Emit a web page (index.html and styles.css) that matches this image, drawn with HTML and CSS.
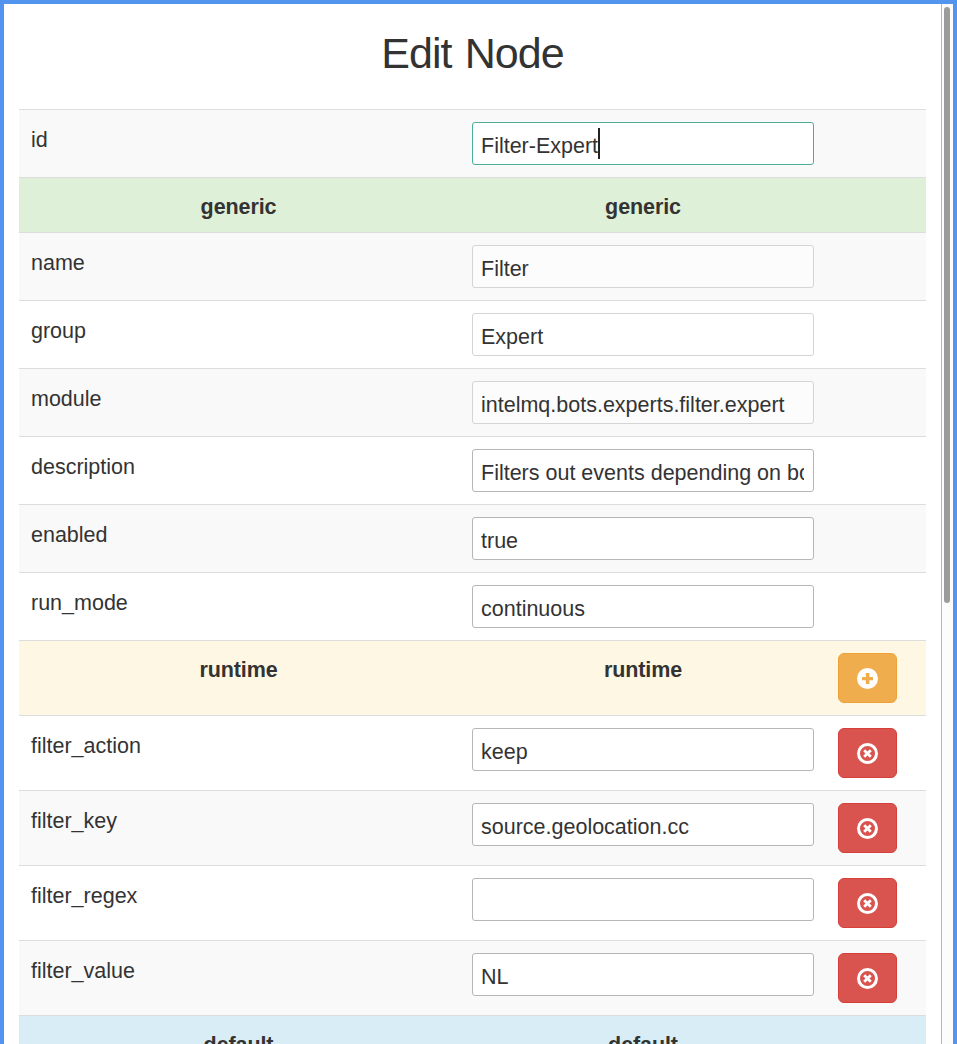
FILE: index.html
```
<!DOCTYPE html>
<html lang="en">
<head>
<meta charset="utf-8">
<title>Edit Node</title>
<link rel="stylesheet" href="styles.css">
</head>
<body>
<svg class="defs" aria-hidden="true">
  <symbol id="plus" viewBox="0 0 21 21"><path fill="#fff" fill-rule="evenodd" d="M10.5 0a10.5 10.5 0 1 0 0 21a10.5 10.5 0 1 0 0-21zM8.8 5h3.6v3.9H16v3.3h-3.6V16H8.8v-3.8H5V8.9h3.8z"/></symbol>
  <symbol id="remove" viewBox="0 0 21 21"><circle cx="10.5" cy="10.5" r="9" fill="none" stroke="#fff" stroke-width="3"/><path fill="none" stroke="#fff" stroke-width="2.8" d="M7.2 7.2l6.6 6.6M13.8 7.2l-6.6 6.6"/></symbol>
</svg>
<main class="dialog">
  <section class="content">
    <h1 class="title">Edit Node</h1>
    <div class="table">
      <div class="row odd"><div class="key">id</div><div class="cell"><div class="field focused">Filter-Expert<span class="caret"></span></div></div></div>
      <div class="row success"><div class="heading">generic</div><div class="heading">generic</div></div>
      <div class="row odd"><div class="key">name</div><div class="cell"><div class="field disabled">Filter</div></div></div>
      <div class="row"><div class="key">group</div><div class="cell"><div class="field disabled">Expert</div></div></div>
      <div class="row odd"><div class="key">module</div><div class="cell"><div class="field disabled">intelmq.bots.experts.filter.expert</div></div></div>
      <div class="row"><div class="key">description</div><div class="cell"><div class="field"><div class="clip">Filters out events depending on bot</div></div></div></div>
      <div class="row odd"><div class="key">enabled</div><div class="cell"><div class="field">true</div></div></div>
      <div class="row"><div class="key">run_mode</div><div class="cell"><div class="field">continuous</div></div></div>
      <div class="row warning"><div class="heading">runtime</div><div class="heading">runtime</div><div class="cell"><button class="btn add" aria-label="Add"><svg class="icon"><use href="#plus"/></svg></button></div></div>
      <div class="row"><div class="key">filter_action</div><div class="cell"><div class="field">keep</div></div><div class="cell"><button class="btn" aria-label="Remove"><svg class="icon"><use href="#remove"/></svg></button></div></div>
      <div class="row odd"><div class="key">filter_key</div><div class="cell"><div class="field">source.geolocation.cc</div></div><div class="cell"><button class="btn" aria-label="Remove"><svg class="icon"><use href="#remove"/></svg></button></div></div>
      <div class="row"><div class="key">filter_regex</div><div class="cell"><div class="field"></div></div><div class="cell"><button class="btn" aria-label="Remove"><svg class="icon"><use href="#remove"/></svg></button></div></div>
      <div class="row odd"><div class="key">filter_value</div><div class="cell"><div class="field">NL</div></div><div class="cell"><button class="btn" aria-label="Remove"><svg class="icon"><use href="#remove"/></svg></button></div></div>
      <div class="row info"><div class="heading">default</div><div class="heading">default</div></div>
    </div>
  </section>
  <div class="scrollbar"><div class="thumb"></div></div>
</main>
</body>
</html>
```
FILE: styles.css
```
* { box-sizing: border-box; }
body {
  margin: 0;
  height: 1044px;
  overflow: hidden;
  font: 21.5px/30px "Liberation Sans", Arial, sans-serif;
  color: #333;
}
.defs { display: none; }
.dialog {
  display: flex;
  height: 1044px;
  overflow: hidden;
  border: 4px solid #5294ee;
  border-bottom: 0;
  background: #fff;
}
.content { flex: 1; padding: 0 15px; }
.title {
  margin: 0;
  height: 105px;
  padding-top: 26px;
  font-size: 43px;
  font-weight: 400;
  line-height: 46px;
  letter-spacing: -0.9px;
  word-spacing: 2px;
  text-align: center;
}
.row {
  display: grid;
  grid-template-columns: 441px 366px 100px;
  border-top: 1px solid #ddd;
}
.odd { background: #f9f9f9; }
.success { background: #dff0d8; }
.warning { background: #fef7e3; }
.info { background: #d9edf7; }
.key, .heading, .cell { padding: 12px; }
.key { padding-top: 15px; }
.heading {
  padding: 14px 12px 10px;
  font-weight: 700;
  letter-spacing: -0.1px;
  text-align: center;
}
.heading:first-child { padding-right: 14px; }
.field {
  display: flex;
  height: 43px;
  padding: 8px 9px 0 8px;
  border: 1px solid #b6b6b6;
  border-radius: 3px;
  background: #fff;
  white-space: nowrap;
}
.disabled { border-color: #d5d5d5; background: rgba(255, 255, 255, 0.5); }
.focused { border-color: #4fac97; }
.clip { overflow: hidden; }
.caret { width: 2px; height: 31px; margin-top: -3px; background: #222; }
.btn {
  display: flex;
  align-items: center;
  justify-content: center;
  width: 59px;
  height: 50px;
  padding: 0;
  border: 1px solid #d43f3a;
  border-radius: 6px;
  background: #d9534f;
}
.add { border-color: #eea236; background: #f0ad4e; }
.icon { width: 21px; height: 21px; }
.scrollbar {
  width: 12px;
  padding: 3px 2px 0;
  border-left: 1px solid #b8b8b8;
  background: #fcfcfc;
}
.thumb { width: 6px; height: 596px; border-radius: 3px; background: #9c9c9c; }
```
